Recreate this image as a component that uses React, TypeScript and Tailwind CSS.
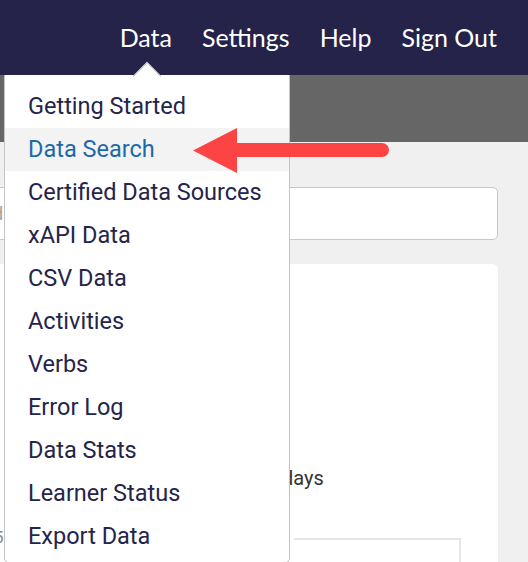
const NAV = ["Data", "Settings", "Help", "Sign Out"];

const MENU = [
  "Getting Started",
  "Data Search",
  "Certified Data Sources",
  "xAPI Data",
  "CSV Data",
  "Activities",
  "Verbs",
  "Error Log",
  "Data Stats",
  "Learner Status",
  "Export Data",
];

export default function App() {
  return (
    <div className="relative w-[528px] h-[562px] overflow-hidden bg-[#f0f0f0] font-['Roboto',sans-serif]">
      {/* Top nav */}
      <nav className="h-[75px] bg-[#25234a] flex items-center justify-end gap-[30px] pr-[31px]">
        {NAV.map((n) => (
          <span key={n} className="font-['Lato',sans-serif] text-[25px] leading-none text-white">
            {n}
          </span>
        ))}
      </nav>
      <div className="h-[67px] bg-[#666666]" />

      {/* Page content (mostly under the menu) */}
      <div className="pt-[45px] pr-[30px]">
        <div className="-ml-[20px] h-[53px] rounded-[5px] border border-[#c8c8c8] bg-white flex items-center">
          <span className="ml-[12px] text-[18px] text-[#a89f91]">d</span>
        </div>
        <div className="-ml-[20px] mt-[24px] h-[320px] rounded-t-[6px] bg-white pt-[204px]">
          <div className="pl-[302px] text-[20px] leading-none text-[#333333]">days</div>
          <div className="mt-[50px] flex items-start">
            <span className="ml-[14px] -mt-[9px] text-[17px] leading-none text-[#888888]">5</span>
            <div className="ml-[290px] w-[167px] h-[40px] border-t-2 border-r-2 border-[#e6e6e6]" />
          </div>
        </div>
      </div>

      {/* Dropdown menu */}
      <div className="absolute left-[4px] top-[75px] w-[286px] h-[488px] bg-white border border-t-0 border-[#c4c4c4] rounded-b-[5px] pt-[10px]">
        <div className="absolute left-[132px] -top-[9px] w-[20px] h-[20px] rotate-45 bg-white border-l border-t border-[#b8b8b8]" />
        <div className="relative">
          {MENU.map((m) => (
            <div
              key={m}
              className={
                m === "Data Search"
                  ? "h-[43px] flex items-center pl-[23px] bg-[#f3f3f3] text-[23.5px] text-[#1d69a8]"
                  : "h-[43px] flex items-center pl-[23px] text-[23.5px] text-[#25244a]"
              }
            >
              {m}
            </div>
          ))}
        </div>
      </div>

      {/* Callout arrow */}
      <svg className="absolute left-0 top-0" width="528" height="200" viewBox="0 0 528 200">
        <polygon points="193,150.5 237,128 237,173" fill="#fd4444" />
        <line x1="236" y1="150" x2="382" y2="150" stroke="#fd4444" strokeWidth="14" strokeLinecap="round" />
      </svg>
    </div>
  );
}
